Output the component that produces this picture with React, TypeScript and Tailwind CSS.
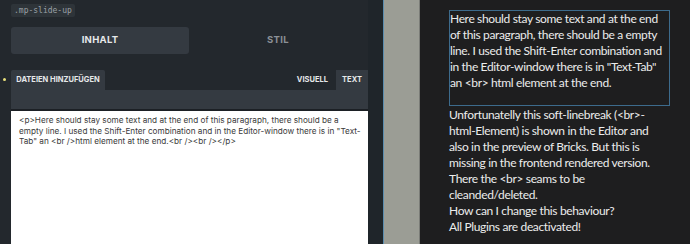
import React from "react";

export default function App() {
  return (
    <div className="flex h-[244px] w-[690px] overflow-hidden" style={{ fontFamily: "Inter, 'Noto Sans', sans-serif" }}>
      {/* Left editor panel */}
      <div className="relative flex h-full w-[368px] shrink-0 flex-col bg-[#23282d] pl-[11px]">
        <div className="mt-[4px] flex">
          <div className="rounded-[2px] bg-[#2e3439] px-[3px] py-[1px] text-[8px] leading-[11px] text-[#9aa0a6]" style={{ fontFamily: "'DejaVu Sans Mono', monospace" }}>
            .mp-slide-up
          </div>
        </div>
        <div className="mt-[10px] flex h-[27px]">
          <div className="flex w-[178px] items-center justify-center rounded-[3px] bg-[#343a41] text-[9.5px] font-bold tracking-[0.3px] text-[#e6e8ea]">INHALT</div>
          <div className="flex w-[178px] items-center justify-center text-[9.5px] font-bold tracking-[0.3px] text-[#8b9096]">STIL</div>
        </div>
        <div className="mt-[16px] flex h-[20px] items-stretch">
          <div className="flex w-[94px] items-center justify-center rounded-t-[2px] bg-[#343a41] text-[7.5px] font-bold text-[#e6e8ea]">DATEIEN HINZUFÜGEN</div>
          <div className="flex-1" />
          <div className="flex items-center pr-[8px] text-[7.5px] font-bold text-[#e6e8ea]">VISUELL</div>
          <div className="flex w-[32px] items-center justify-center bg-[#343a41] text-[7.5px] font-bold text-[#e6e8ea]">TEXT</div>
        </div>
        <div className="h-[19px] bg-[#343a41]" />
        <div className="h-[2px] bg-[#1c2025]" />
        <div className="flex-1 bg-white pl-[8px] pr-[5px] pt-[4px] text-[8.2px] leading-[10.6px] text-[#3a3a3a]" style={{ fontFamily: "Inter, Arial, sans-serif" }}>
          &lt;p&gt;Here should stay some text and at the end of this paragraph, there should be a empty line. I used the Shift-Enter combination and in the Editor-window there is in "Text-Tab" an &lt;br /&gt;html element at the end.&lt;br /&gt;&lt;br /&gt;&lt;/p&gt;
        </div>
        <div className="absolute left-[3px] top-[78px] h-[3px] w-[3px] rounded-full bg-[#e8e07a]" />
      </div>
      <div className="h-full w-[15px] shrink-0 bg-[#1f252a]" />
      {/* Blue line + grey strip */}
      <div className="h-full w-[1px] shrink-0 bg-[#5a8cae]" />
      <div className="h-full w-[35px] shrink-0 bg-[#9b9d95]" />
      <div className="h-full w-[1px] shrink-0 bg-[#7a7c77]" />
      {/* Right preview */}
      <div className="h-full flex-1 bg-[#1e1e1f] pl-[29px] pr-[20px] pt-[10px] text-[12px] leading-[16px] tracking-[-0.35px] text-[#ececec]" style={{ fontFamily: "Lato, 'Open Sans', sans-serif" }}>
        <div className="border border-[#3d6b8c] pb-[14px]">
          Here should stay some text and at the end of this paragraph, there should be a empty line. I used the Shift-Enter combination and in the Editor-window there is in "Text-Tab" an &lt;br&gt; html element at the end.
        </div>
        <div className="mt-[1px]">
          Unfortunatelly this soft-linebreak (&lt;br&gt;-html-Element) is shown in the Editor and also in the preview of Bricks. But this is missing in the frontend rendered version. There the &lt;br&gt; seams to be cleanded/deleted.
          <br />
          How can I change this behaviour?
          <br />
          All Plugins are deactivated!
        </div>
      </div>
    </div>
  );
}
